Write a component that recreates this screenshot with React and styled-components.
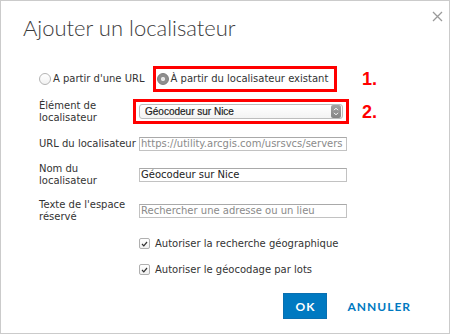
import React from "react";
import styled, { createGlobalStyle } from "styled-components";

const GlobalStyle = createGlobalStyle`
  html, body {
    margin: 0;
    padding: 0;
    background: #ffffff;
  }
  * {
    box-sizing: border-box;
  }
`;

function App() {
  return (
    <>
      <GlobalStyle />
      <Dialog>
        <Header>
          <Title>Ajouter un localisateur</Title>
          <CloseButton aria-label="Fermer">
            <svg width="11" height="11" viewBox="0 0 11 11">
              <path
                d="M1 1 L10 10 M10 1 L1 10"
                stroke="#9a9a9a"
                strokeWidth="1.3"
                fill="none"
              />
            </svg>
          </CloseButton>
        </Header>

        <Form>
          <Row $mt={0} $h={26}>
            <RadioGroup>
              <RadioOption>
                <Radio />
                <span>A partir d'une URL</span>
              </RadioOption>
              <Highlight $w={184} $h={26} $pad="0 0 0 1px">
                <RadioOption>
                  <Radio $checked />
                  <span>À partir du localisateur existant</span>
                </RadioOption>
              </Highlight>
            </RadioGroup>
            <Marker>1.</Marker>
          </Row>

          <Row $mt={7} $h={25}>
            <Field>
              <Label>
                Élément de
                <br />
                localisateur
              </Label>
              <Highlight $w={216} $h={25} $pad="2px 3px" $shift={-6}>
                <Select>
                  <span>Géocodeur sur Nice</span>
                  <Stepper>
                    <svg width="6" height="9" viewBox="0 0 6 9">
                      <path
                        d="M1 3.2 L3 1.2 L5 3.2 M1 5.8 L3 7.8 L5 5.8"
                        stroke="#ffffff"
                        strokeWidth="1"
                        fill="none"
                      />
                    </svg>
                  </Stepper>
                </Select>
              </Highlight>
            </Field>
            <Marker>2.</Marker>
          </Row>

          <Row $mt={13} $h={14}>
            <Field>
              <Label>URL du localisateur</Label>
              <TextBox $muted>https://utility.arcgis.com/usrsvcs/servers</TextBox>
            </Field>
          </Row>

          <Row $mt={12} $h={24}>
            <Field>
              <Label>
                Nom du
                <br />
                localisateur
              </Label>
              <TextBox>Géocodeur sur Nice</TextBox>
            </Field>
          </Row>

          <Row $mt={12} $h={24}>
            <Field>
              <Label>
                Texte de l'espace
                <br />
                réservé
              </Label>
              <TextBox $muted>Rechercher une adresse ou un lieu</TextBox>
            </Field>
          </Row>

          <Row $mt={14} $h={13}>
            <CheckOption>
              <CheckBox>
                <svg width="7" height="6" viewBox="0 0 7 6">
                  <path
                    d="M1 3 L2.8 4.8 L6 1"
                    stroke="#333"
                    strokeWidth="1.2"
                    fill="none"
                  />
                </svg>
              </CheckBox>
              <span>Autoriser la recherche géographique</span>
            </CheckOption>
          </Row>

          <Row $mt={13} $h={13}>
            <CheckOption>
              <CheckBox>
                <svg width="7" height="6" viewBox="0 0 7 6">
                  <path
                    d="M1 3 L2.8 4.8 L6 1"
                    stroke="#333"
                    strokeWidth="1.2"
                    fill="none"
                  />
                </svg>
              </CheckBox>
              <span>Autoriser le géocodage par lots</span>
            </CheckOption>
          </Row>
        </Form>

        <Footer>
          <PrimaryButton>OK</PrimaryButton>
          <LinkButton>ANNULER</LinkButton>
        </Footer>
      </Dialog>
    </>
  );
}

// Styled components
const Dialog = styled.div`
  width: 450px;
  height: 334px;
  border: 1px solid #cbcbcb;
  background: #ffffff;
  display: flex;
  flex-direction: column;
  font-family: "DejaVu Sans", Verdana, sans-serif;
  font-size: 10px;
  color: #333333;
`;

const Header = styled.div`
  display: flex;
  justify-content: space-between;
  align-items: flex-start;
  padding: 14px 6px 0 22px;
  height: 65px;
`;

const Title = styled.h1`
  margin: 0;
  font-family: "Lato", "Open Sans", sans-serif;
  font-weight: 300;
  font-size: 22px;
  line-height: 26px;
  color: #3c3c3c;
`;

const CloseButton = styled.button`
  border: none;
  background: none;
  padding: 0;
  margin-top: -5px;
  width: 12px;
  height: 12px;
  display: flex;
  align-items: center;
  justify-content: center;
  cursor: pointer;
`;

const Form = styled.div`
  display: flex;
  flex-direction: column;
  padding-left: 38px;
`;

const Row = styled.div`
  display: grid;
  grid-template-columns: 322px auto;
  align-items: center;
  height: ${(p) => p.$h}px;
  margin-top: ${(p) => p.$mt}px;
`;

const RadioGroup = styled.div`
  display: flex;
  align-items: center;
  gap: 8px;
`;

const RadioOption = styled.label`
  display: flex;
  align-items: center;
  gap: 2px;
  line-height: 12px;
`;

const Radio = styled.span`
  width: 12px;
  height: 12px;
  border-radius: 50%;
  flex: none;
  border: 1px solid ${(p) => (p.$checked ? "#7d7d7d" : "#b4b4b4")};
  background: ${(p) =>
    p.$checked
      ? "radial-gradient(circle, #e6e6e6 0 1.8px, #8e8e8e 2.4px)"
      : "linear-gradient(#ffffff, #f2f2f2)"};
`;

const Highlight = styled.div`
  width: ${(p) => p.$w}px;
  height: ${(p) => p.$h}px;
  margin-left: ${(p) => p.$shift || 0}px;
  padding: ${(p) => p.$pad};
  border: 3px solid #ff0000;
  display: flex;
  align-items: center;
`;

const Marker = styled.span`
  font-family: "Liberation Sans", Arial, sans-serif;
  font-weight: 700;
  font-size: 18px;
  color: #ff0000;
  line-height: 18px;
  padding-left: 1px;
`;

const Field = styled.div`
  display: grid;
  grid-template-columns: 100px 208px;
  align-items: center;
`;

const Label = styled.span`
  line-height: 12px;
  white-space: nowrap;
`;

const Select = styled.div`
  width: 100%;
  height: 15px;
  border: 1px solid #bdbdbd;
  border-radius: 3px;
  background: linear-gradient(#ffffff, #f3f3f3);
  display: flex;
  align-items: center;
  justify-content: space-between;
  padding: 0 1px 0 5px;
  font-family: "Liberation Sans", Arial, sans-serif;
  font-size: 10px;
  color: #1e1e1e;
  -webkit-text-stroke: 0.2px #1e1e1e;
`;

const Stepper = styled.span`
  width: 10px;
  height: 13px;
  border-radius: 2px;
  background: linear-gradient(#a3a3a3, #858585);
  display: flex;
  align-items: center;
  justify-content: center;
`;

const TextBox = styled.div`
  width: 208px;
  height: 14px;
  border: 1px solid #c2c2c2;
  border-top-color: #a9a9a9;
  padding: 0 1px;
  line-height: 12px;
  white-space: nowrap;
  overflow: hidden;
  color: ${(p) => (p.$muted ? "#8a8a8a" : "#222222")};
`;

const CheckOption = styled.label`
  display: flex;
  align-items: center;
  gap: 5px;
  margin-left: 100px;
  line-height: 12px;
  white-space: nowrap;
`;

const CheckBox = styled.span`
  width: 11px;
  height: 11px;
  flex: none;
  border: 1px solid #b0b0b0;
  border-radius: 2px;
  background: linear-gradient(#ffffff, #f0f0f0);
  display: flex;
  align-items: center;
  justify-content: center;
`;

const Footer = styled.div`
  display: flex;
  justify-content: flex-end;
  align-items: center;
  gap: 20px;
  margin-top: 17px;
  padding-right: 38px;
`;

const PrimaryButton = styled.button`
  width: 44px;
  height: 26px;
  border: 1px solid #0a6fb0;
  background: #0079c1;
  color: #ffffff;
  font-family: "Lato", "Open Sans", sans-serif;
  font-weight: 700;
  font-size: 12px;
  letter-spacing: 1px;
  padding: 0;
  cursor: pointer;
`;

const LinkButton = styled.button`
  border: none;
  background: none;
  padding: 0;
  color: #0079c1;
  font-family: "Lato", "Open Sans", sans-serif;
  font-weight: 700;
  font-size: 12px;
  letter-spacing: 1px;
  cursor: pointer;
`;

export default App;
